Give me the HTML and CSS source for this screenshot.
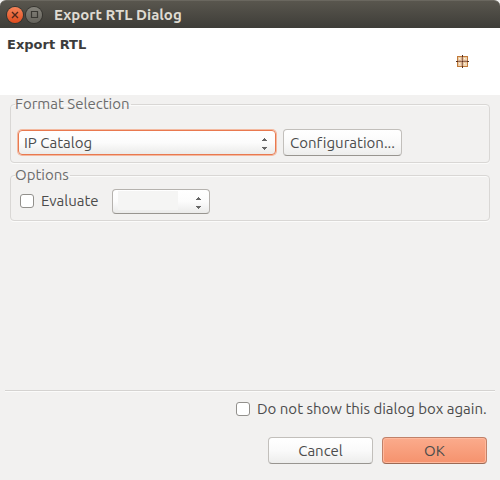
FILE: index.html
```
<!DOCTYPE html>
<html lang="en">
<head>
<meta charset="utf-8">
<meta name="viewport" content="width=device-width, initial-scale=1">
<title>Export RTL Dialog</title>
<link rel="stylesheet" href="styles.css">
</head>
<body>
<div class="dialog">
  <header class="titlebar">
    <button class="window-button close" type="button" aria-label="Close">
      <svg viewBox="0 0 16 16" width="16" height="16"><path d="M5 5l6 6M11 5l-6 6" fill="none" stroke="#50281c" stroke-width="1.4"/></svg>
    </button>
    <button class="window-button maximize" type="button" aria-label="Maximize">
      <svg viewBox="0 0 16 16" width="16" height="16"><path d="M5.5 4.5h6v6h-6z" fill="none" stroke="#393833" stroke-width="1.2"/></svg>
    </button>
    <span class="window-title">Export RTL Dialog</span>
  </header>
  <div class="banner">
    <h1>Export RTL</h1>
    <svg class="banner-icon" viewBox="0 0 13 13" width="13" height="13" shape-rendering="crispEdges">
      <path d="M1 1h11v11H1z" fill="#c17a3b"/>
      <path d="M2 2h9v9H2z" fill="#ebc9a0"/>
      <path d="M3 3h3v3H3zM8 3h3v3H8zM3 8h3v3H3zM8 8h3v3H8z" fill="#f2d8b6"/>
      <path d="M3 3h1v1H3zM8 3h1v1H8zM3 8h1v1H3zM8 8h1v1H8z" fill="#fff5e2"/>
      <path d="M2 5h9v1H2zM5 2h1v9H5z" fill="#d4b097"/>
      <path d="M6 1h1v11H6zM1 6h11v1H1z" fill="#9c6b50"/>
      <path d="M6 0h1v2H6zM6 11h1v2H6zM0 6h2v1H0zM11 6h2v1h-2zM6 6h1v1H6z" fill="#53301f"/>
    </svg>
  </div>
  <form class="content">
    <fieldset class="format">
      <legend>Format Selection</legend>
      <div class="row">
        <select class="focused" aria-label="Format"><option>IP Catalog</option></select>
        <button class="button" type="button">Configuration...</button>
      </div>
    </fieldset>
    <fieldset class="options">
      <legend>Options</legend>
      <div class="row">
        <label class="check"><input type="checkbox">Evaluate</label>
        <select class="language" aria-label="Evaluation language"><option></option></select>
      </div>
    </fieldset>
  </form>
  <footer class="footer">
    <label class="check"><input type="checkbox">Do not show this dialog box again.</label>
    <div class="actions">
      <button class="button" type="button">Cancel</button>
      <button class="button primary" type="button">OK</button>
    </div>
  </footer>
</div>
</body>
</html>
```
FILE: styles.css
```
* {
  box-sizing: border-box;
}

body {
  margin: 0;
  background: #f2f1f0;
  color: #4c4c4c;
  font: 15px/18px Ubuntu, "Noto Sans", sans-serif;
  font-variant-ligatures: none;
}

button,
select,
input {
  margin: 0;
  color: inherit;
  font: inherit;
  font-variant-ligatures: none;
}

.dialog {
  display: flex;
  flex-direction: column;
  min-height: 100vh;
}

.titlebar {
  display: flex;
  align-items: center;
  gap: 3px;
  height: 28px;
  padding: 0 7px;
  border-top: 1px solid #6a675f;
  border-radius: 6px 6px 0 0;
  background: linear-gradient(#59564e, #3e3d38);
}

.window-button {
  display: flex;
  width: 16px;
  height: 16px;
  padding: 0;
  border: 0;
  border-radius: 50%;
  box-shadow: 0 0 0 1px #35342f;
}

.close {
  background: linear-gradient(#f68459, #df4b1d);
}

.maximize {
  background: linear-gradient(#85837b, #65635c);
}

.window-title {
  margin-left: 9px;
  color: #dfdbd2;
  font-weight: 700;
}

.banner {
  display: flex;
  justify-content: space-between;
  height: 67px;
  padding: 8px 31px 0 7px;
  background: #fff;
}

.banner h1 {
  margin: 0;
  color: #3c3c3c;
  font: 700 13px/18px "DejaVu Sans", sans-serif;
}

.banner-icon {
  margin-top: 19px;
}

.content {
  display: flex;
  flex: 1;
  flex-direction: column;
  gap: 3px;
  padding: 0 10px;
}

fieldset {
  min-width: 0;
  margin: 0;
  border: 1px solid #d9d7d5;
  border-radius: 4px;
  box-shadow: 0 1px #fbfbfa, inset 0 1px #fbfbfa;
}

.format {
  padding: 16px 7px 6px;
}

.options {
  padding: 5px 9px 6px;
}

legend {
  margin-left: -3px;
  padding: 0 1px 0 0;
  color: #6c6c6c;
}

.options legend {
  margin-left: -5px;
}

.row {
  display: flex;
  align-items: center;
  gap: 7px;
}

.options .row {
  align-items: flex-start;
  gap: 11px;
}

select {
  --field-width: 0;
  height: 25px;
  padding: 0 5px;
  border: 1px solid #b5b2ae;
  border-bottom-color: #989590;
  border-radius: 4px;
  appearance: none;
  background:
    conic-gradient(from 135deg at 50% 0, #666 90deg, transparent 0) right 7px top 7px / 7px 3px no-repeat,
    conic-gradient(from -45deg at 50% 100%, #666 90deg, transparent 0) right 7px top 16px / 7px 3px no-repeat,
    linear-gradient(#f5f5f4, #f5f5f4) 5px 1px / var(--field-width) 19px no-repeat,
    linear-gradient(#fff, #fcfcfc 50%, #ebebea);
}

select.focused {
  flex: 0 1 258px;
  border-color: #e9794f;
  box-shadow: 0 0 0 1px #f3b9a0;
}

select.language {
  --field-width: 60px;
  flex: 0 0 98px;
}

.button {
  height: 27px;
  padding: 0 4px;
  border: 1px solid #c2bfbb;
  border-bottom-color: #989590;
  border-radius: 4px;
  background: linear-gradient(#fff, #fafafa 50%, #ededec);
}

.format .button {
  flex: 0 0 119px;
}

.check {
  display: flex;
  align-items: center;
  gap: 7px;
}

.options .check {
  min-width: 81px;
  height: 24px;
}

.footer .check {
  min-width: 257px;
}

.check input {
  width: 14px;
  height: 14px;
  border: 1px solid #92908c;
  border-radius: 3px;
  appearance: none;
  background: #fff;
}

.footer {
  display: flex;
  flex-direction: column;
  align-items: flex-end;
  gap: 19px;
  margin: 0 5px;
  padding: 9px 2px 16px 0;
  border-top: 1px solid #d5d3d1;
  box-shadow: inset 0 1px #fbfbfa;
}

.actions {
  display: flex;
  gap: 9px;
  padding-right: 6px;
}

.actions .button {
  width: 105px;
}

.actions .primary {
  border-color: #c08169;
  border-bottom-color: #9c6954;
  background: linear-gradient(#fbab8c, #f5926d);
  box-shadow: inset 0 0 0 1px #ffb99d;
}
```
